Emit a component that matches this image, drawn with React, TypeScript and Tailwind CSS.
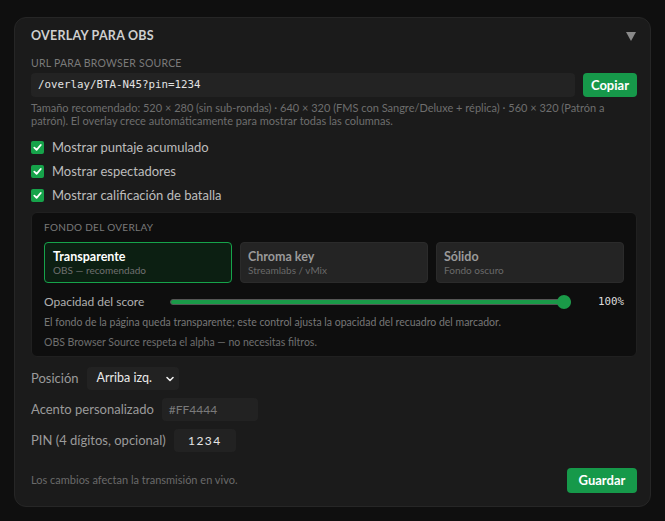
import React from "react";

function Check() {
  return (
    <span className="flex h-[13px] w-[13px] items-center justify-center rounded-[2px] bg-[#16a34a]">
      <svg width="9" height="9" viewBox="0 0 10 10">
        <path d="M1.5 5.2 L4 7.6 L8.6 2.2" stroke="white" strokeWidth="2" fill="none" strokeLinecap="round" strokeLinejoin="round" />
      </svg>
    </span>
  );
}

export default function App() {
  const sans = { fontFamily: "Lato, 'Noto Sans', sans-serif" };
  const mono = { fontFamily: "'DejaVu Sans Mono', monospace" };
  return (
    <div className="min-h-[521px] bg-[#0f0f0f] px-[14px] pt-[17px] pb-[14px]" style={sans}>
      <div className="rounded-[12px] border border-[#262626] bg-[#1b1b1b] pl-4 pr-[13px] pt-[10px] pb-[13px]">
        <div className="flex h-[16px] items-center justify-between">
          <div className="text-[12.5px] font-bold leading-[16px] tracking-[0.02em] text-[#cfcfcf]">OVERLAY PARA OBS</div>
          <svg width="10" height="9" viewBox="0 0 10 9" className="mr-[1px]">
            <path d="M0 0 L10 0 L5 9 Z" fill="#8a8a8a" />
          </svg>
        </div>

        <div className="mt-[12px] text-[10.5px] leading-[14px] tracking-[0.02em] text-[#7a7a7a]">URL PARA BROWSER SOURCE</div>
        <div className="mt-[3px] flex items-center gap-2">
          <div className="flex h-[24px] flex-1 items-center rounded-[4px] bg-[#232323] px-[7px] text-[10.8px] text-[#e2e2e2]" style={mono}>
            /overlay/BTA-N45?pin=1234
          </div>
          <button className="h-[24px] rounded-[4px] bg-[#16994a] px-[8px] text-[13px] font-bold leading-[24px] text-white">Copiar</button>
        </div>
        <div className="mt-[4px] text-[11px] leading-[13px] text-[#6e6e6e]">
          Tamaño recomendado: 520 × 280 (sin sub-rondas) · 640 × 320 (FMS con Sangre/Deluxe + réplica) · 560 × 320 (Patrón a patrón). El overlay crece automáticamente para mostrar todas las columnas.
        </div>

        <div className="mt-[12px] flex flex-col gap-[8px]">
          {["Mostrar puntaje acumulado", "Mostrar espectadores", "Mostrar calificación de batalla"].map((t) => (
            <div key={t} className="flex h-[16px] items-center gap-[8px]">
              <Check />
              <span className="text-[13px] leading-[16px] text-[#bdbdbd]">{t}</span>
            </div>
          ))}
        </div>

        <div className="mt-[9px] rounded-[6px] border border-[#202020] bg-[#0e0e0e] px-[12px] pt-[8px] pb-[7px]">
          <div className="text-[10px] leading-[13px] tracking-[0.03em] text-[#7a7a7a]">FONDO DEL OVERLAY</div>
          <div className="mt-[8px] grid grid-cols-3 gap-[8px]">
            <div className="h-[41px] rounded-[4px] border border-[#16a34a] bg-[#0c1f12] px-[8px] pt-[6px]">
              <div className="text-[12.5px] font-bold leading-[15px] text-white">Transparente</div>
              <div className="text-[10px] leading-[13px] text-[#707070]">OBS — recomendado</div>
            </div>
            <div className="h-[41px] rounded-[4px] border border-[#2b2b2b] bg-[#242424] px-[7px] pt-[6px]">
              <div className="text-[12.5px] font-bold leading-[15px] text-[#9a9a9a]">Chroma key</div>
              <div className="text-[10px] leading-[13px] text-[#6a6a6a]">Streamlabs / vMix</div>
            </div>
            <div className="h-[41px] rounded-[4px] border border-[#2b2b2b] bg-[#242424] px-[7px] pt-[6px]">
              <div className="text-[12.5px] font-bold leading-[15px] text-[#9a9a9a]">Sólido</div>
              <div className="text-[10px] leading-[13px] text-[#6a6a6a]">Fondo oscuro</div>
            </div>
          </div>
          <div className="mt-[11px] flex h-[16px] items-center">
            <span className="w-[126px] text-[12px] text-[#b0b0b0]">Opacidad del score</span>
            <div className="relative flex h-[14px] w-[401px] items-center">
              <div className="h-[6px] w-full rounded-full border border-[#555] bg-[#1a9a48]" />
              <div className="absolute right-0 top-0 h-[14px] w-[14px] rounded-full bg-[#1a9a48]" />
            </div>
            <span className="ml-auto text-[10.8px] text-[#dcdcdc]" style={mono}>100%</span>
          </div>
          <div className="mt-[6px] text-[10.5px] leading-[13px] text-[#777]">
            El fondo de la página queda transparente; este control ajusta la opacidad del recuadro del marcador.
          </div>
          <div className="mt-[7px] text-[10.5px] leading-[13px] text-[#6f6f6f]">OBS Browser Source respeta el alpha — no necesitas filtros.</div>
        </div>

        <div className="mt-[10px] flex items-center gap-[8px]">
          <span className="text-[13px] text-[#9a9a9a]">Posición</span>
          <div className="flex h-[23px] w-[92px] items-center justify-between rounded-[4px] bg-[#222] pl-[10px] pr-[4px] text-[12.5px] text-[#eaeaea]">
            Arriba izq.
            <svg width="10" height="10" viewBox="0 0 10 10">
              <path d="M2 3.5 L5 6.5 L8 3.5" stroke="#eee" strokeWidth="1.6" fill="none" strokeLinecap="round" strokeLinejoin="round" />
            </svg>
          </div>
        </div>
        <div className="mt-[8px] flex items-center gap-[8px]">
          <span className="text-[13px] text-[#9a9a9a]">Acento personalizado</span>
          <div className="flex h-[23px] w-[96px] items-center rounded-[4px] bg-[#222] px-[7px] text-[12px] text-[#7a7a7a]">#FF4444</div>
        </div>
        <div className="mt-[8px] flex items-center gap-[8px]">
          <span className="text-[13px] text-[#9a9a9a]">PIN (4 dígitos, opcional)</span>
          <div className="flex h-[23px] w-[62px] items-center justify-center rounded-[4px] bg-[#222] text-[12px] tracking-[0.12em] text-[#e5e5e5]">1234</div>
        </div>

        <div className="mt-[16px] flex items-center justify-between">
          <span className="text-[11px] text-[#6a6a6a]">Los cambios afectan la transmisión en vivo.</span>
          <button className="h-[25px] w-[70px] rounded-[4px] bg-[#16994a] text-[13px] font-bold text-white">Guardar</button>
        </div>
      </div>
    </div>
  );
}
